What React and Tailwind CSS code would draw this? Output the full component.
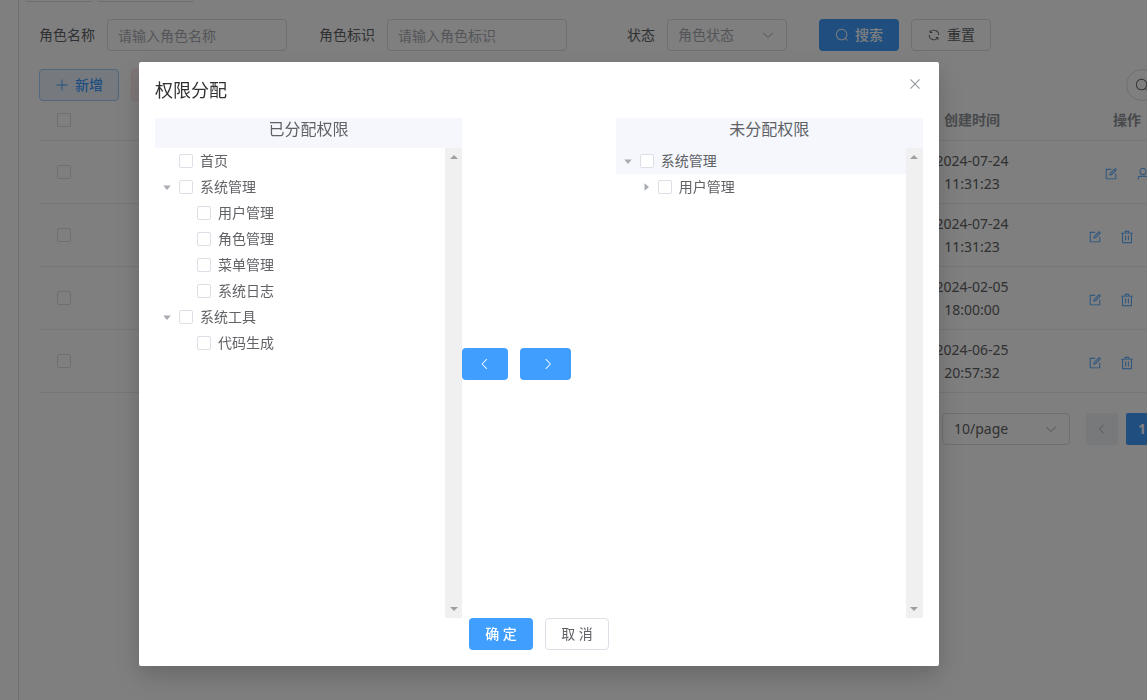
import React, { useState } from "react";

const ICONS = {
  search:
    "m795.904 750.72 124.992 124.928a32 32 0 0 1-45.248 45.248L750.656 795.904a416 416 0 1 1 45.248-45.248zM480 832a352 352 0 1 0 0-704 352 352 0 0 0 0 704z",
  refresh:
    "M771.776 794.88A384 384 0 0 1 128 512h64a320 320 0 0 0 555.712 216.448H654.72a32 32 0 1 1 0-64h149.056a32 32 0 0 1 32 32v148.928a32 32 0 1 1-64 0v-50.56zM276.288 295.616h92.992a32 32 0 0 1 0 64H220.16a32 32 0 0 1-32-32V178.56a32 32 0 0 1 64 0v50.56A384 384 0 0 1 896.128 512h-64a320 320 0 0 0-555.776-216.384z",
  plus:
    "M480 480V128a32 32 0 0 1 64 0v352h352a32 32 0 1 1 0 64H544v352a32 32 0 1 1-64 0V544H128a32 32 0 0 1 0-64h352z",
  down:
    "M831.872 340.864 512 652.672 192.128 340.864a30.592 30.592 0 0 0-42.752 0 29.12 29.12 0 0 0 0 41.6L489.664 714.24a32 32 0 0 0 44.672 0l340.288-331.712a29.12 29.12 0 0 0 0-41.728 30.592 30.592 0 0 0-42.752 0z",
  left:
    "M609.408 149.376 277.76 489.6a32 32 0 0 0 0 44.672l331.648 340.352a29.12 29.12 0 0 0 41.728 0 30.592 30.592 0 0 0 0-42.752L339.264 511.936l311.872-319.872a30.592 30.592 0 0 0 0-42.688 29.12 29.12 0 0 0-41.728 0z",
  right:
    "M340.864 149.312a30.592 30.592 0 0 0 0 42.752L652.736 512 340.864 831.872a30.592 30.592 0 0 0 0 42.752 29.12 29.12 0 0 0 41.728 0L714.24 534.336a32 32 0 0 0 0-44.672L382.592 149.376a29.12 29.12 0 0 0-41.728 0z",
  close:
    "M764.288 214.592 512 466.88 259.712 214.592a31.936 31.936 0 0 0-45.12 45.12L466.752 512 214.528 764.224a31.936 31.936 0 1 0 45.12 45.184L512 557.184l252.288 252.288a31.936 31.936 0 0 0 45.12-45.12L557.12 512.064l252.288-252.352a31.936 31.936 0 1 0-45.12-45.184z",
  caret: "M384 192v640l384-320.064z",
  edit:
    "M832 512a32 32 0 1 1 64 0v352a32 32 0 0 1-32 32H160a32 32 0 0 1-32-32V160a32 32 0 0 1 32-32h352a32 32 0 0 1 0 64H192v640h640V512zm-362.048 42.24 52.8-7.552L847.104 222.4a32 32 0 1 0-45.248-45.248L477.44 501.44l-7.552 52.8zm422.4-422.4a96 96 0 0 1 0 135.808l-331.84 331.84a32 32 0 0 1-18.112 9.088L436.8 623.68a32 32 0 0 1-36.224-36.224l15.104-105.6a32 32 0 0 1 9.024-18.112l331.904-331.84a96 96 0 0 1 135.744 0z",
  trash:
    "M160 256H96a32 32 0 0 1 0-64h256V95.936a32 32 0 0 1 32-32h256a32 32 0 0 1 32 32V192h256a32 32 0 1 1 0 64h-64v672a32 32 0 0 1-32 32H192a32 32 0 0 1-32-32V256zm448-64v-64H416v64h192zM224 896h576V256H224v640zm192-128a32 32 0 0 1-32-32V416a32 32 0 0 1 64 0v320a32 32 0 0 1-32 32zm192 0a32 32 0 0 1-32-32V416a32 32 0 0 1 64 0v320a32 32 0 0 1-32 32z",
  user:
    "M512 512a192 192 0 1 0 0-384 192 192 0 0 0 0 384zm0 64a256 256 0 1 1 0-512 256 256 0 0 1 0 512zm320 320v-96a96 96 0 0 0-96-96H288a96 96 0 0 0-96 96v96a32 32 0 1 1-64 0v-96a160 160 0 0 1 160-160h448a160 160 0 0 1 160 160v96a32 32 0 1 1-64 0z",
};

const ACTION_LABELS = { edit: "编辑", trash: "删除", user: "权限分配" };

const roles = [
  { id: 1, date: "2024-07-24", time: "11:31:23", actions: ["edit", "user"] },
  { id: 2, date: "2024-07-24", time: "11:31:23", actions: ["edit", "trash", "user"] },
  { id: 3, date: "2024-02-05", time: "18:00:00", actions: ["edit", "trash", "user"] },
  { id: 4, date: "2024-06-25", time: "20:57:32", actions: ["edit", "trash", "user"] },
];

const assignedTree = [
  { id: "home", label: "首页" },
  {
    id: "system",
    label: "系统管理",
    open: true,
    children: [
      { id: "sys-user", label: "用户管理" },
      { id: "sys-role", label: "角色管理" },
      { id: "sys-menu", label: "菜单管理" },
      { id: "sys-log", label: "系统日志" },
    ],
  },
  {
    id: "tools",
    label: "系统工具",
    open: true,
    children: [{ id: "codegen", label: "代码生成" }],
  },
];

const unassignedTree = [
  {
    id: "un-system",
    label: "系统管理",
    open: true,
    active: true,
    children: [{ id: "un-user", label: "用户管理", children: [] }],
  },
];

function Icon({ name, className = "size-[14px]" }) {
  return (
    <svg viewBox="0 0 1024 1024" fill="currentColor" aria-hidden="true" className={`shrink-0 ${className}`}>
      <path d={ICONS[name]} />
    </svg>
  );
}

function Checkbox({ id, label }) {
  return (
    <input
      id={id}
      type="checkbox"
      aria-label={label}
      className="block size-[14px] shrink-0 appearance-none rounded-xs border border-[#dcdfe6] bg-white checked:border-[#409eff] checked:bg-[#409eff]"
    />
  );
}

function TreeNode({ node, nested }) {
  const [open, setOpen] = useState(Boolean(node.open));

  return (
    <li>
      <div className={`flex h-[26px] items-center ${nested ? "pl-[18px]" : ""} ${node.active ? "bg-[#f5f7fc]" : ""}`}>
        {node.children ? (
          <button
            type="button"
            aria-label={node.label}
            onClick={() => setOpen(!open)}
            className="flex size-6 items-center justify-center text-[#a8abb2]"
          >
            <Icon name="caret" className={open ? "size-3 rotate-90" : "size-3"} />
          </button>
        ) : (
          <span className="size-6" />
        )}
        <Checkbox id={node.id} />
        <label htmlFor={node.id} className="pl-[7px]">{node.label}</label>
      </div>
      {open && node.children?.length > 0 && (
        <ul>
          {node.children.map((child) => (
            <TreeNode key={child.id} node={child} nested />
          ))}
        </ul>
      )}
    </li>
  );
}

function TreePanel({ title, nodes }) {
  return (
    <section className="flex w-2/5 flex-col">
      <h3 className="h-[30px] bg-[#f5f7fc] text-center text-base leading-[22px]">{title}</h3>
      <div className="flex grow">
        <ul className="grow">
          {nodes.map((node) => (
            <TreeNode key={node.id} node={node} />
          ))}
        </ul>
        <div className="flex w-[17px] flex-col items-center justify-between bg-[#f0f0f0] py-[7px] text-[#a0a0a0]">
          <svg viewBox="0 0 8 4" className="h-1 w-2" fill="currentColor" aria-hidden="true"><path d="M0 4 4 0l4 4z" /></svg>
          <svg viewBox="0 0 8 4" className="h-1 w-2" fill="currentColor" aria-hidden="true"><path d="M0 0h8L4 4z" /></svg>
        </div>
      </div>
    </section>
  );
}

function FilterForm() {
  return (
    <form className="flex items-center gap-8" onSubmit={(e) => e.preventDefault()}>
      <div className="flex items-center gap-3">
        <label htmlFor="role-name" className="w-14 text-right">角色名称</label>
        <input id="role-name" placeholder="请输入角色名称" className="h-8 w-[180px] rounded border border-[#dcdfe6] px-[10px] placeholder:text-[#a8abb2]" />
      </div>
      <div className="flex items-center gap-3">
        <label htmlFor="role-code" className="w-14 text-right">角色标识</label>
        <input id="role-code" placeholder="请输入角色标识" className="h-8 w-[180px] rounded border border-[#dcdfe6] px-[10px] placeholder:text-[#a8abb2]" />
      </div>
      <div className="flex items-center gap-3">
        <label htmlFor="role-status" className="w-14 text-right">状态</label>
        <div className="relative">
          <select id="role-status" className="h-8 w-[120px] appearance-none rounded border border-[#dcdfe6] px-[10px] text-[#a8abb2]">
            <option>角色状态</option>
          </select>
          <Icon name="down" className="pointer-events-none absolute top-[9px] right-3 size-[14px] text-[#a8abb2]" />
        </div>
      </div>
      <div className="flex gap-3">
        <button type="submit" className="flex h-8 w-20 items-center justify-center gap-[6px] rounded bg-[#409eff] font-medium text-white">
          <Icon name="search" />
          搜索
        </button>
        <button type="reset" className="flex h-8 w-20 items-center justify-center gap-[6px] rounded border border-[#dcdfe6]">
          <Icon name="refresh" />
          重置
        </button>
      </div>
    </form>
  );
}

function RoleTable() {
  return (
    <table className="w-full table-fixed border-collapse">
      <colgroup>
        <col className="w-[50px]" />
        <col />
        <col className="w-[168px]" />
        <col className="w-[142px]" />
      </colgroup>
      <thead>
        <tr className="h-[39px] border-b border-[#ebeef5] text-[#909399]">
          <th><div className="flex justify-center"><Checkbox label="全选" /></div></th>
          <th></th>
          <th className="font-bold">创建时间</th>
          <th className="font-bold">操作</th>
        </tr>
      </thead>
      <tbody>
        {roles.map((role) => (
          <tr key={role.id} className="h-[63px] border-b border-[#ebeef5]">
            <td><div className="flex justify-center"><Checkbox label="选择" /></div></td>
            <td></td>
            <td className="px-10 text-center leading-[23px]">{role.date} {role.time}</td>
            <td>
              <div className="flex justify-center gap-[18px] pt-1 text-[#409eff]">
                {role.actions.map((name) => (
                  <button key={name} type="button" aria-label={ACTION_LABELS[name]}>
                    <Icon name={name} />
                  </button>
                ))}
              </div>
            </td>
          </tr>
        ))}
      </tbody>
    </table>
  );
}

function Pagination() {
  return (
    <div className="mt-5 flex items-center justify-end gap-2">
      <div className="relative mr-2">
        <select aria-label="每页条数" className="h-8 w-32 appearance-none rounded border border-[#dcdfe6] px-[11px]">
          <option>10/page</option>
        </select>
        <Icon name="down" className="pointer-events-none absolute top-[9px] right-3 size-[14px] text-[#a8abb2]" />
      </div>
      <button type="button" aria-label="上一页" disabled className="flex size-8 items-center justify-center rounded-xs bg-[#f0f2f5] text-[#a8abb2]">
        <Icon name="left" className="size-3" />
      </button>
      <button type="button" className="size-8 rounded-xs bg-[#409eff] font-bold text-white">1</button>
      <button type="button" aria-label="下一页" disabled className="flex size-8 items-center justify-center rounded-xs bg-[#f0f2f5] text-[#a8abb2]">
        <Icon name="right" className="size-3" />
      </button>
    </div>
  );
}

function PermissionDialog() {
  return (
    <div className="fixed inset-0 flex items-start justify-center overflow-hidden bg-black/50 pt-[62px] pr-[69px]">
      <div role="dialog" aria-labelledby="dialog-title" className="w-full max-w-[800px] rounded-xs bg-white p-4 shadow-[0_12px_32px_4px_rgba(0,0,0,0.08),0_8px_20px_rgba(0,0,0,0.12)]">
        <header className="flex justify-between pb-4">
          <h2 id="dialog-title" className="text-lg leading-6 text-[#303133]">权限分配</h2>
          <button type="button" aria-label="关闭" className="flex size-4 items-center justify-center text-[#909399]">
            <Icon name="close" className="size-4 -translate-y-[2px]" />
          </button>
        </header>
        <div className="flex min-h-[500px]">
          <TreePanel title="已分配权限" nodes={assignedTree} />
          <div className="flex w-1/5 items-center gap-3 pb-2">
            <button type="button" aria-label="添加" className="flex h-8 w-[46px] items-center justify-center rounded bg-[#409eff] text-white">
              <Icon name="left" />
            </button>
            <button type="button" aria-label="移除" className="flex h-8 w-[51px] items-center justify-center rounded bg-[#409eff] pl-[5px] text-white">
              <Icon name="right" />
            </button>
          </div>
          <TreePanel title="未分配权限" nodes={unassignedTree} />
        </div>
        <footer className="flex justify-center gap-3">
          <button type="button" className="h-8 w-16 rounded bg-[#409eff] font-medium text-white">确 定</button>
          <button type="button" className="h-8 w-16 rounded border border-[#dcdfe6]">取 消</button>
        </footer>
      </div>
    </div>
  );
}

function App() {
  return (
    <div className="flex h-screen overflow-hidden bg-white font-['Noto_Sans','Noto_Sans_CJK_SC',sans-serif] text-sm text-[#606266]">
      <aside className="w-[19px] shrink-0 border-r border-[#dcdfe6]" />
      <main className="min-w-0 grow overflow-hidden">
        <div className="flex gap-1 pl-[6px]">
          <span className="h-[2px] w-[68px] rounded-b-xs border-b border-[#dcdfe6]" />
          <span className="h-[2px] w-[97px] rounded-b-xs border-b border-[#dcdfe6]" />
        </div>
        {/* content is wider than the viewport, the right side is clipped */}
        <div className="-mr-[51px] pt-[17px] pl-5">
          <FilterForm />
          <div className="flex gap-3 pt-[18px]">
            <button type="button" className="flex h-8 w-20 items-center justify-center gap-[6px] rounded border border-[#a0cfff] bg-[#ecf5ff] font-medium text-[#409eff]">
              <Icon name="plus" />
              新增
            </button>
            <button type="button" aria-label="删除" disabled className="flex h-8 w-20 items-center justify-center rounded border border-[#fde2e2] bg-[#fef0f0] text-[#fab6b6]">
              <Icon name="trash" />
            </button>
            <div className="ml-auto flex gap-2">
              <button type="button" aria-label="搜索" className="flex size-8 items-center justify-center rounded-full border border-[#dcdfe6]">
                <Icon name="search" />
              </button>
              <button type="button" aria-label="刷新" className="flex size-8 items-center justify-center rounded-full border border-[#dcdfe6]">
                <Icon name="refresh" />
              </button>
            </div>
          </div>
          <RoleTable />
          <Pagination />
        </div>
      </main>
      <PermissionDialog />
    </div>
  );
}

export default App;
